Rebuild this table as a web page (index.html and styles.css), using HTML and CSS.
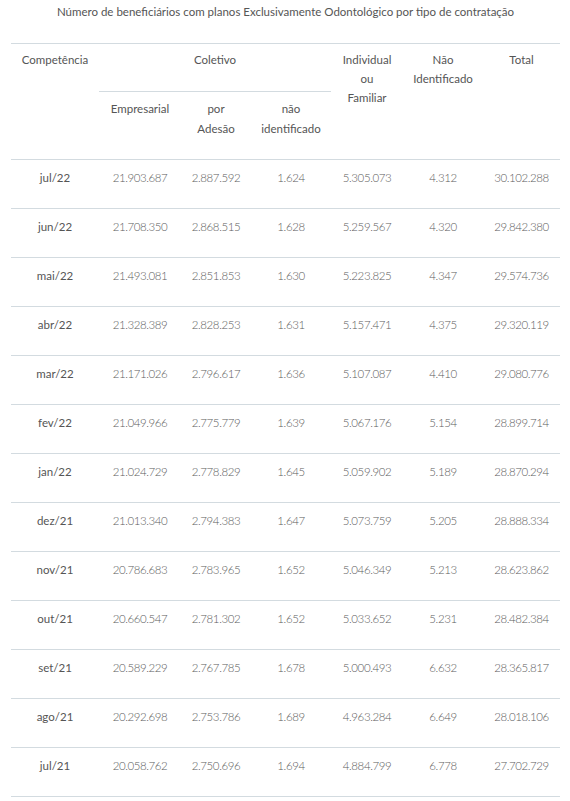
FILE: index.html
```html
<!DOCTYPE html>
<html lang="pt-BR">
<head>
<meta charset="utf-8">
<title>Beneficiários</title>
<link rel="stylesheet" href="styles.css">
</head>
<body>
<div class="wrap">
  <p class="caption">Número de beneficiários com planos Exclusivamente Odontológico por tipo de contratação</p>
  <table class="data">
    <colgroup>
      <col class="c1"><col class="c2"><col class="c3"><col class="c4"><col class="c5"><col class="c6"><col class="c7">
    </colgroup>
    <thead>
      <tr class="h1">
        <th rowspan="2">Competência</th>
        <th colspan="3" class="group">Coletivo</th>
        <th rowspan="2">Individual<br>ou<br>Familiar</th>
        <th rowspan="2">Não<br>Identificado</th>
        <th rowspan="2">Total</th>
      </tr>
      <tr class="h2">
        <th>Empresarial</th>
        <th>por<br>Adesão</th>
        <th>não<br>identificado</th>
      </tr>
    </thead>
    <tbody>
      <tr><td class="m">jul/22</td><td>21.903.687</td><td>2.887.592</td><td>1.624</td><td>5.305.073</td><td>4.312</td><td>30.102.288</td></tr>
      <tr><td class="m">jun/22</td><td>21.708.350</td><td>2.868.515</td><td>1.628</td><td>5.259.567</td><td>4.320</td><td>29.842.380</td></tr>
      <tr><td class="m">mai/22</td><td>21.493.081</td><td>2.851.853</td><td>1.630</td><td>5.223.825</td><td>4.347</td><td>29.574.736</td></tr>
      <tr><td class="m">abr/22</td><td>21.328.389</td><td>2.828.253</td><td>1.631</td><td>5.157.471</td><td>4.375</td><td>29.320.119</td></tr>
      <tr><td class="m">mar/22</td><td>21.171.026</td><td>2.796.617</td><td>1.636</td><td>5.107.087</td><td>4.410</td><td>29.080.776</td></tr>
      <tr><td class="m">fev/22</td><td>21.049.966</td><td>2.775.779</td><td>1.639</td><td>5.067.176</td><td>5.154</td><td>28.899.714</td></tr>
      <tr><td class="m">jan/22</td><td>21.024.729</td><td>2.778.829</td><td>1.645</td><td>5.059.902</td><td>5.189</td><td>28.870.294</td></tr>
      <tr><td class="m">dez/21</td><td>21.013.340</td><td>2.794.383</td><td>1.647</td><td>5.073.759</td><td>5.205</td><td>28.888.334</td></tr>
      <tr><td class="m">nov/21</td><td>20.786.683</td><td>2.783.965</td><td>1.652</td><td>5.046.349</td><td>5.213</td><td>28.623.862</td></tr>
      <tr><td class="m">out/21</td><td>20.660.547</td><td>2.781.302</td><td>1.652</td><td>5.033.652</td><td>5.231</td><td>28.482.384</td></tr>
      <tr><td class="m">set/21</td><td>20.589.229</td><td>2.767.785</td><td>1.678</td><td>5.000.493</td><td>6.632</td><td>28.365.817</td></tr>
      <tr><td class="m">ago/21</td><td>20.292.698</td><td>2.753.786</td><td>1.689</td><td>4.963.284</td><td>6.649</td><td>28.018.106</td></tr>
      <tr><td class="m">jul/21</td><td>20.058.762</td><td>2.750.696</td><td>1.694</td><td>4.884.799</td><td>6.778</td><td>27.702.729</td></tr>
    </tbody>
  </table>
</div>
</body>
</html>
```
FILE: styles.css
```css
* { box-sizing: border-box; }
html, body { margin: 0; padding: 0; background: #fff; }
body {
  font-family: Lato, "Open Sans", sans-serif;
  color: #666;
  font-size: 11.5px;
}
.wrap { padding: 0 10px 0 11px; }
.caption {
  margin: 0;
  padding-top: 4px;
  height: 43px;
  text-align: center;
  color: #555;
  font-size: 11.5px;
  line-height: 16px;
}
.data {
  width: 549px;
  border-collapse: collapse;
  table-layout: fixed;
}
.c1 { width: 88px; }
.c2 { width: 82px; }
.c3 { width: 70px; }
.c4 { width: 80px; }
.c5 { width: 72px; }
.c6 { width: 80px; }
.c7 { width: 77px; }
.data th, .data td {
  text-align: center;
  vertical-align: top;
  padding: 0;
  line-height: 20px;
}
.data th {
  font-weight: normal;
  color: #555;
}
.data thead tr.h1 { border-top: 1px solid #d3dbe0; }
.data tr.h1 th { height: 48px; padding-top: 6px; }
.data th.group { border-bottom: 1px solid #d3dbe0; }
.data tr.h2 th { height: 68px; padding-top: 7px; }
.data tr.h1 th[rowspan] { line-height: 19px; padding-top: 6px; }
.data thead { border-bottom: 1px solid #d3dbe0; }
.data tbody tr { border-bottom: 1px solid #d3dbe0; }
.data td {
  height: 49px;
  padding-top: 8px;
  color: #5c5c5c;
  font-weight: 300;
  letter-spacing: -0.4px;
}
.data td.m { color: #555; font-weight: normal; letter-spacing: 0; }
```
